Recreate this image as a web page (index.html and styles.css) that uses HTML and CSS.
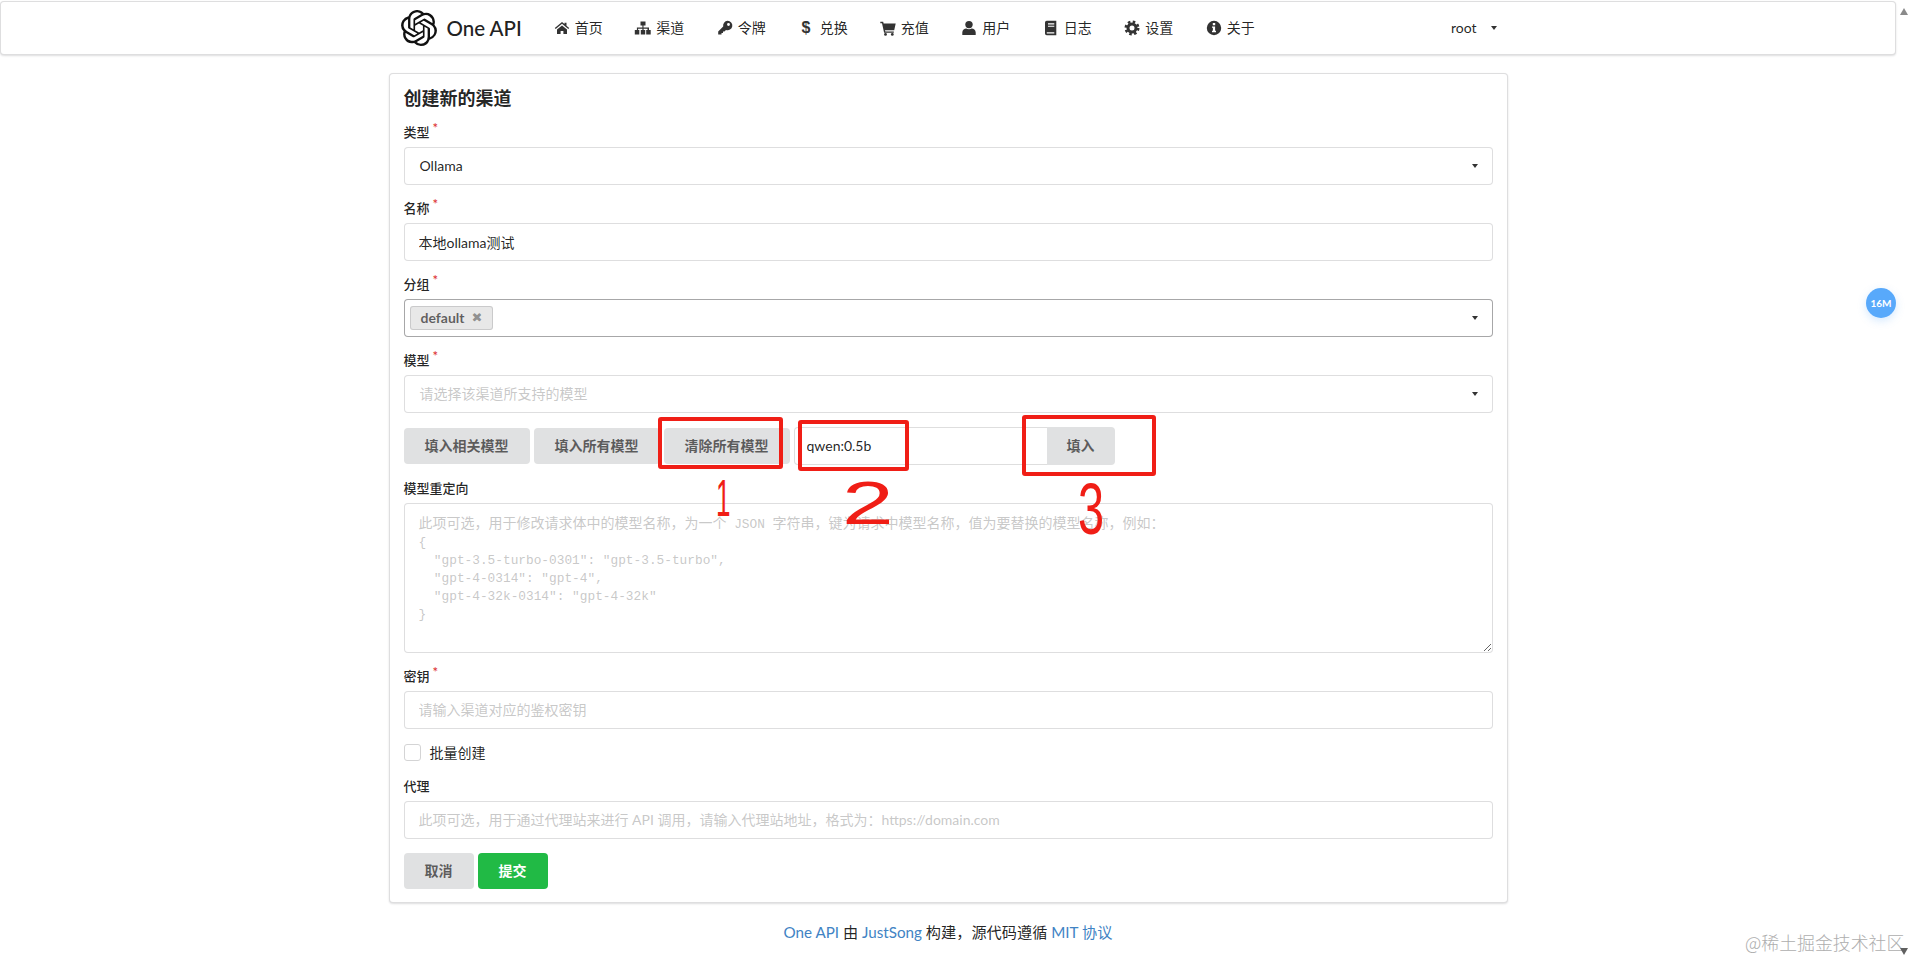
FILE: index.html
```html
<!DOCTYPE html>
<html lang="zh">
<head>
<meta charset="utf-8">
<title>One API</title>
<link rel="stylesheet" href="styles.css">
</head>
<body>
<div class="page">
  <header class="nav">
    <div class="nav-inner">
      <a class="brand">
        <svg class="logo" viewBox="0 0 24 24"><path d="M22.2819 9.8211a5.9847 5.9847 0 0 0-.5157-4.9108 6.0462 6.0462 0 0 0-6.5098-2.9A6.0651 6.0651 0 0 0 4.9807 4.1818a5.9847 5.9847 0 0 0-3.9977 2.9 6.0462 6.0462 0 0 0 .7427 7.0966 5.98 5.98 0 0 0 .511 4.9107 6.051 6.051 0 0 0 6.5146 2.9001A5.9847 5.9847 0 0 0 13.2599 24a6.0557 6.0557 0 0 0 5.7718-4.2058 5.9894 5.9894 0 0 0 3.9977-2.9001 6.0557 6.0557 0 0 0-.7475-7.0729zm-9.022 12.6081a4.4755 4.4755 0 0 1-2.8764-1.0408l.1419-.0804 4.7783-2.7582a.7948.7948 0 0 0 .3927-.6813v-6.7369l2.02 1.1686a.071.071 0 0 1 .038.052v5.5826a4.504 4.504 0 0 1-4.4945 4.4944zm-9.6607-4.1254a4.4708 4.4708 0 0 1-.5346-3.0137l.142.0852 4.783 2.7582a.7712.7712 0 0 0 .7806 0l5.8428-3.3685v2.3324a.0804.0804 0 0 1-.0332.0615L9.74 19.9502a4.4992 4.4992 0 0 1-6.1408-1.6464zM2.3408 7.8956a4.485 4.485 0 0 1 2.3655-1.9728V11.6a.7664.7664 0 0 0 .3879.6765l5.8144 3.3543-2.0201 1.1685a.0757.0757 0 0 1-.071 0l-4.8303-2.7865A4.504 4.504 0 0 1 2.3408 7.872zm16.5963 3.8558L13.1038 8.364 15.1192 7.2a.0757.0757 0 0 1 .071 0l4.8303 2.7913a4.4944 4.4944 0 0 1-.6765 8.1042v-5.6772a.79.79 0 0 0-.407-.667zm2.0107-3.0231l-.142-.0852-4.7735-2.7818a.7759.7759 0 0 0-.7854 0L9.409 9.2297V6.8974a.0662.0662 0 0 1 .0284-.0615l4.8303-2.7866a4.4992 4.4992 0 0 1 6.6802 4.66zM8.3065 12.863l-2.02-1.1638a.0804.0804 0 0 1-.038-.0567V6.0742a4.4992 4.4992 0 0 1 7.3757-3.4537l-.142.0805L8.704 5.459a.7948.7948 0 0 0-.3927.6813zm1.0976-2.3654l2.602-1.4998 2.6069 1.4998v2.9994l-2.5974 1.4997-2.6067-1.4997Z"/></svg>
        <span class="brand-name">One API</span>
      </a>
      <a class="nav-item"><svg class="ni" viewBox="0 0 16 16"><path d="M8 2 .8 8l.9 1L8 3.8 14.3 9l.9-1-2.7-2.3V2.8h-2v1.2zM3 9.6V14h3.6v-3h2.8v3H13V9.6L8 5.5z"/></svg>首页</a>
      <a class="nav-item"><svg class="ni" viewBox="0 0 16 16"><path d="M5.5 1.5h5v4h-2v2h5.5V10h1.7v4.5h-4.5V10h1.3V8.8H8.6V10h1.6v4.5H5.8V10h1.6V8.8H3.1V10h1.2v4.5H-.2V10H1.9V7.5h5.5v-2h-1.9z"/></svg>渠道</a>
      <a class="nav-item"><svg class="ni" viewBox="0 0 16 16"><path fill-rule="evenodd" d="M10.5.8a4.7 4.7 0 1 1-1.5 9.1l-1.6 1.7H6V13H4.5v1.6H1.2v-3.2l5-5A4.7 4.7 0 0 1 10.5.8zm1 2.2a1.4 1.4 0 1 0 0 2.9 1.4 1.4 0 0 0 0-2.9z"/></svg>令牌</a>
      <a class="nav-item"><span class="ni-glyph">$</span>兑换</a>
      <a class="nav-item"><svg class="ni" viewBox="0 0 16 16"><path d="M.3 1.8h2.9l.4 1.6H15.7l-1.5 6.8H5l.3 1.2h8.5v1.4H4.1L2 3.2H.3z"/><circle cx="5.5" cy="14.4" r="1.4"/><circle cx="12.3" cy="14.4" r="1.4"/></svg>充值</a>
      <a class="nav-item"><svg class="ni" viewBox="0 0 16 16"><circle cx="8" cy="4.6" r="3.7"/><path d="M1.3 15v-2.6C1.3 10 3.5 8.5 5.3 8.5c1.2.9 4.2.9 5.4 0 1.8 0 4 1.5 4 3.9V15z"/></svg>用户</a>
      <a class="nav-item"><svg class="ni" viewBox="0 0 16 16"><path fill-rule="evenodd" d="M3.7 .8h9.6v14.4H3.7a1.7 1.7 0 0 1-1.7-1.7V2.5A1.7 1.7 0 0 1 3.7.8zM5 3.3v1.1h6.3V3.3zm0 2.4v1.1h6.3V5.7zm-1.2 6.6v1.2h7.5v-1.2z"/></svg>日志</a>
      <a class="nav-item"><svg class="ni" viewBox="0 0 16 16"><circle cx="8" cy="8" r="4" fill="none" stroke="#333" stroke-width="3"/><circle cx="8" cy="8" r="6.2" fill="none" stroke="#333" stroke-width="2.6" stroke-dasharray="2.5 2.37"/></svg>设置</a>
      <a class="nav-item"><svg class="ni" viewBox="0 0 16 16"><path fill-rule="evenodd" d="M8 .8a7.2 7.2 0 1 1 0 14.4A7.2 7.2 0 0 1 8 .8zM6.8 3v2.2h2.4V3zM6 6.4v1.4h.9v3H6v1.4h4v-1.4h-.9V6.4z"/></svg>关于</a>
      <a class="nav-user">root<i class="caret"></i></a>
    </div>
  </header>

  <main class="card">
    <h1 class="title">创建新的渠道</h1>

    <div class="field">
      <label class="label req">类型</label>
      <div class="select"><span>Ollama</span><i class="caret"></i></div>
    </div>
    <div class="field">
      <label class="label req">名称</label>
      <input class="input" type="text" value="本地ollama测试">
    </div>
    <div class="field">
      <label class="label req">分组</label>
      <div class="select active"><span class="chip">default<b class="chip-x">✖</b></span><i class="caret"></i></div>
    </div>
    <div class="field">
      <label class="label req">模型</label>
      <div class="select"><span class="ph">请选择该渠道所支持的模型</span><i class="caret"></i></div>
    </div>

    <div class="actions field">
      <button class="btn">填入相关模型</button>
      <button class="btn">填入所有模型</button>
      <button class="btn">清除所有模型</button>
      <div class="action-input">
        <input class="input joined" type="text" value="qwen:0.5b">
        <button class="btn attached">填入</button>
      </div>
    </div>

    <div class="field">
      <label class="label">模型重定向</label>
      <div class="textarea"><span class="ta-cjk">此项可选，用于修改请求体中的模型名称，为一个</span> JSON <span class="ta-cjk">字符串，键为请求中模型名称，值为要替换的模型名称，例如：</span>
{
  "gpt-3.5-turbo-0301": "gpt-3.5-turbo",
  "gpt-4-0314": "gpt-4",
  "gpt-4-32k-0314": "gpt-4-32k"
}</div>
    </div>

    <div class="field">
      <label class="label req">密钥</label>
      <input class="input" type="text" placeholder="请输入渠道对应的鉴权密钥">
    </div>

    <div class="field check-row">
      <span class="check"></span><span>批量创建</span>
    </div>

    <div class="field">
      <label class="label">代理</label>
      <input class="input" type="text" placeholder="此项可选，用于通过代理站来进行 API 调用，请输入代理站地址，格式为：https://domain.com">
    </div>

    <div class="form-buttons">
      <button class="btn">取消</button>
      <button class="btn green">提交</button>
    </div>
  </main>

  <footer class="footer"><a>One API</a> 由 <a>JustSong</a> 构建，源代码遵循 <a>MIT 协议</a></footer>

  <div class="badge">16M</div>
  <div class="watermark">@稀土掘金技术社区</div>
  <i class="sb-up"></i>
  <i class="sb-down"></i>

  <div class="mark mark-1"></div>
  <div class="mark mark-2"></div>
  <div class="mark mark-3"></div>
  <span class="digit digit-1">1</span>
  <span class="digit digit-2">2</span>
  <span class="digit digit-3">3</span>
</div>
</body>
</html>
```
FILE: styles.css
```css
* { box-sizing: border-box; }
html, body { margin: 0; padding: 0; height: 100%; overflow: hidden; background: #fff; }
body {
  font-family: Lato, "Noto Sans CJK SC", "Helvetica Neue", Arial, sans-serif;
  font-size: 14px;
  line-height: 20px;
  color: rgba(0, 0, 0, .87);
}
.page { position: relative; width: 1912px; height: 958px; overflow: hidden; padding-right: 16px; padding-top: 1px; }

.nav {
  height: 54px;
  background: #fff;
  border: 1px solid rgba(34, 36, 38, .15);
  border-radius: 4px;
  box-shadow: 0 1px 2px 0 rgba(34, 36, 38, .15);
}
.nav-inner { width: 1127px; margin: 0 auto; height: 100%; display: flex; align-items: center; }
.brand { display: flex; align-items: center; padding: 0 16px; }
.logo { width: 36px; height: 36px; margin-right: 10px; display: block; fill: #111; }
.brand-name { font-size: 20.5px; font-weight: 500; color: #222; white-space: nowrap; }
.nav-item { display: flex; align-items: center; padding: 0 16px; white-space: nowrap; width: 81.5px; }
.ni { width: 16px; height: 16px; margin-right: 5px; fill: #333; flex: none; overflow: visible; }
.ni-glyph { width: 16px; margin-right: 6px; font-family: "Liberation Sans", sans-serif; font-weight: 700; font-size: 16px; text-align: center; color: #333; }
.nav-user { margin-left: auto; padding: 0 15px 0 16px; display: flex; align-items: center; }
.nav-user .caret { margin-left: 14px; }

.caret {
  display: block;
  flex: none;
  width: 0;
  height: 0;
  border-left: 3.5px solid transparent;
  border-right: 3.5px solid transparent;
  border-top: 4.5px solid rgba(0, 0, 0, .8);
}

.card {
  width: 1119px;
  margin: 18px auto 0;
  padding: 12.5px 14px 14px;
  height: 830px;
  background: #fff;
  border: 1px solid rgba(34, 36, 38, .15);
  border-radius: 4px;
  box-shadow: 0 1px 2px 0 rgba(34, 36, 38, .15);
}
.title { margin: 0 0 13px; font-size: 18px; line-height: 23px; font-weight: 700; color: rgba(0, 0, 0, .87); }
.field { margin-bottom: 14px; }
.label { display: block; height: 20px; margin-bottom: 4px; font-size: 13px; line-height: 18px; font-weight: 500; color: rgba(0, 0, 0, .87); }
.req::after { content: "*"; margin-left: 3px; color: #db2828; position: relative; top: -4px; }

.input, .select, .textarea {
  display: flex;
  width: 100%;
  height: 38px;
  padding: 0 14px;
  font: inherit;
  color: rgba(0, 0, 0, .87);
  background: #fff;
  border: 1px solid rgba(34, 36, 38, .15);
  border-radius: 4px;
  outline: none;
}
.input::placeholder { color: rgba(191, 191, 191, .87); }
.select { align-items: center; justify-content: space-between; padding: 0 14px 0 15px; }
.select.active { border-color: rgba(34, 36, 38, .4); padding-left: 5px; border-radius: 4px; }
.ph { color: rgba(191, 191, 191, .87); }
.chip {
  display: inline-flex;
  align-items: center;
  height: 24px;
  padding: 0 10px;
  font-size: 14px;
  font-weight: 700;
  color: rgba(0, 0, 0, .6);
  background: #e8e8e8;
  border: 1px solid rgba(34, 36, 38, .15);
  border-radius: 3px;
}
.chip-x { margin-left: 7px; font-size: 13px; color: rgba(0, 0, 0, .4); font-family: "DejaVu Sans", sans-serif; }

.actions { display: flex; align-items: center; gap: 4px; height: 38px; }
.btn {
  height: 36px;
  padding: 0 21px;
  font: inherit;
  font-weight: 700;
  font-size: 14px;
  color: rgba(0, 0, 0, .6);
  background: #e0e1e2;
  border: 0;
  border-radius: 4px;
  flex: none;
}
.action-input { display: flex; align-items: stretch; height: 38px; }
.joined { width: 253px; border-right: 0; border-radius: 4px 0 0 4px; padding-left: 12px; }
.attached { height: 38px; width: 68px; padding: 0; border-radius: 0 4px 4px 0; }

.textarea {
  display: block;
  height: 150px;
  padding: 9px 14px;
  font-family: "Liberation Mono", monospace;
  font-size: 12.8px;
  line-height: 18px;
  white-space: pre;
  color: rgba(191, 191, 191, .87);
  overflow: hidden;
  resize: vertical;
}
.ta-cjk { font-family: "Noto Sans CJK SC", sans-serif; font-size: 14px; }

.check-row { display: flex; align-items: center; height: 20px; }
.check { width: 17px; height: 17px; margin-right: 9px; background: #fff; border: 1px solid #d4d4d5; border-radius: 3px; }

.form-buttons { display: flex; gap: 4px; }
.form-buttons .btn { width: 70px; padding: 0; }
.green { color: #fff; background: #21ba45; }

.footer { margin-top: 19px; text-align: center; font-size: 15.2px; }
.footer a { color: #4183c4; }

.badge {
  position: absolute;
  left: 1866px;
  top: 288px;
  width: 30px;
  height: 30px;
  border-radius: 50%;
  background: #58a9fb;
  color: #fff;
  font-size: 10px;
  font-weight: 700;
  line-height: 30px;
  text-align: center;
  box-shadow: 0 3px 8px rgba(88, 169, 251, .25);
}
.watermark {
  position: absolute;
  left: 1745px;
  top: 930px;
  font-family: "Noto Sans CJK SC", sans-serif;
  font-size: 17.9px;
  font-weight: 300;
  line-height: 24px;
  color: #aeaeae;
  white-space: nowrap;
}
.sb-up, .sb-down { position: absolute; left: 1900px; width: 0; height: 0; border-left: 4.5px solid transparent; border-right: 4.5px solid transparent; }
.sb-up { top: 8px; border-bottom: 7px solid #8a8a8a; }
.sb-down { top: 948px; border-top: 7px solid #606060; }

.mark { position: absolute; border: 4px solid #f01e16; border-radius: 3px; }
.mark-1 { left: 658px; top: 417px; width: 125px; height: 52px; }
.mark-2 { left: 798px; top: 420px; width: 111px; height: 51px; }
.mark-3 { left: 1022px; top: 415px; width: 134px; height: 61px; }
.digit { position: absolute; font-family: "Liberation Sans", sans-serif; color: #f01e16; line-height: 1; transform-origin: left top; }
.digit-1 { left: 716px; top: 472px; font-size: 52px; font-weight: 400; transform: scaleX(.5); }
.digit-2 { left: 842px; top: 472px; font-size: 62px; font-weight: 400; transform: scaleX(1.5); }
.digit-3 { left: 1078px; top: 473px; font-size: 72px; font-weight: 400; transform: scaleX(.65); }
```
